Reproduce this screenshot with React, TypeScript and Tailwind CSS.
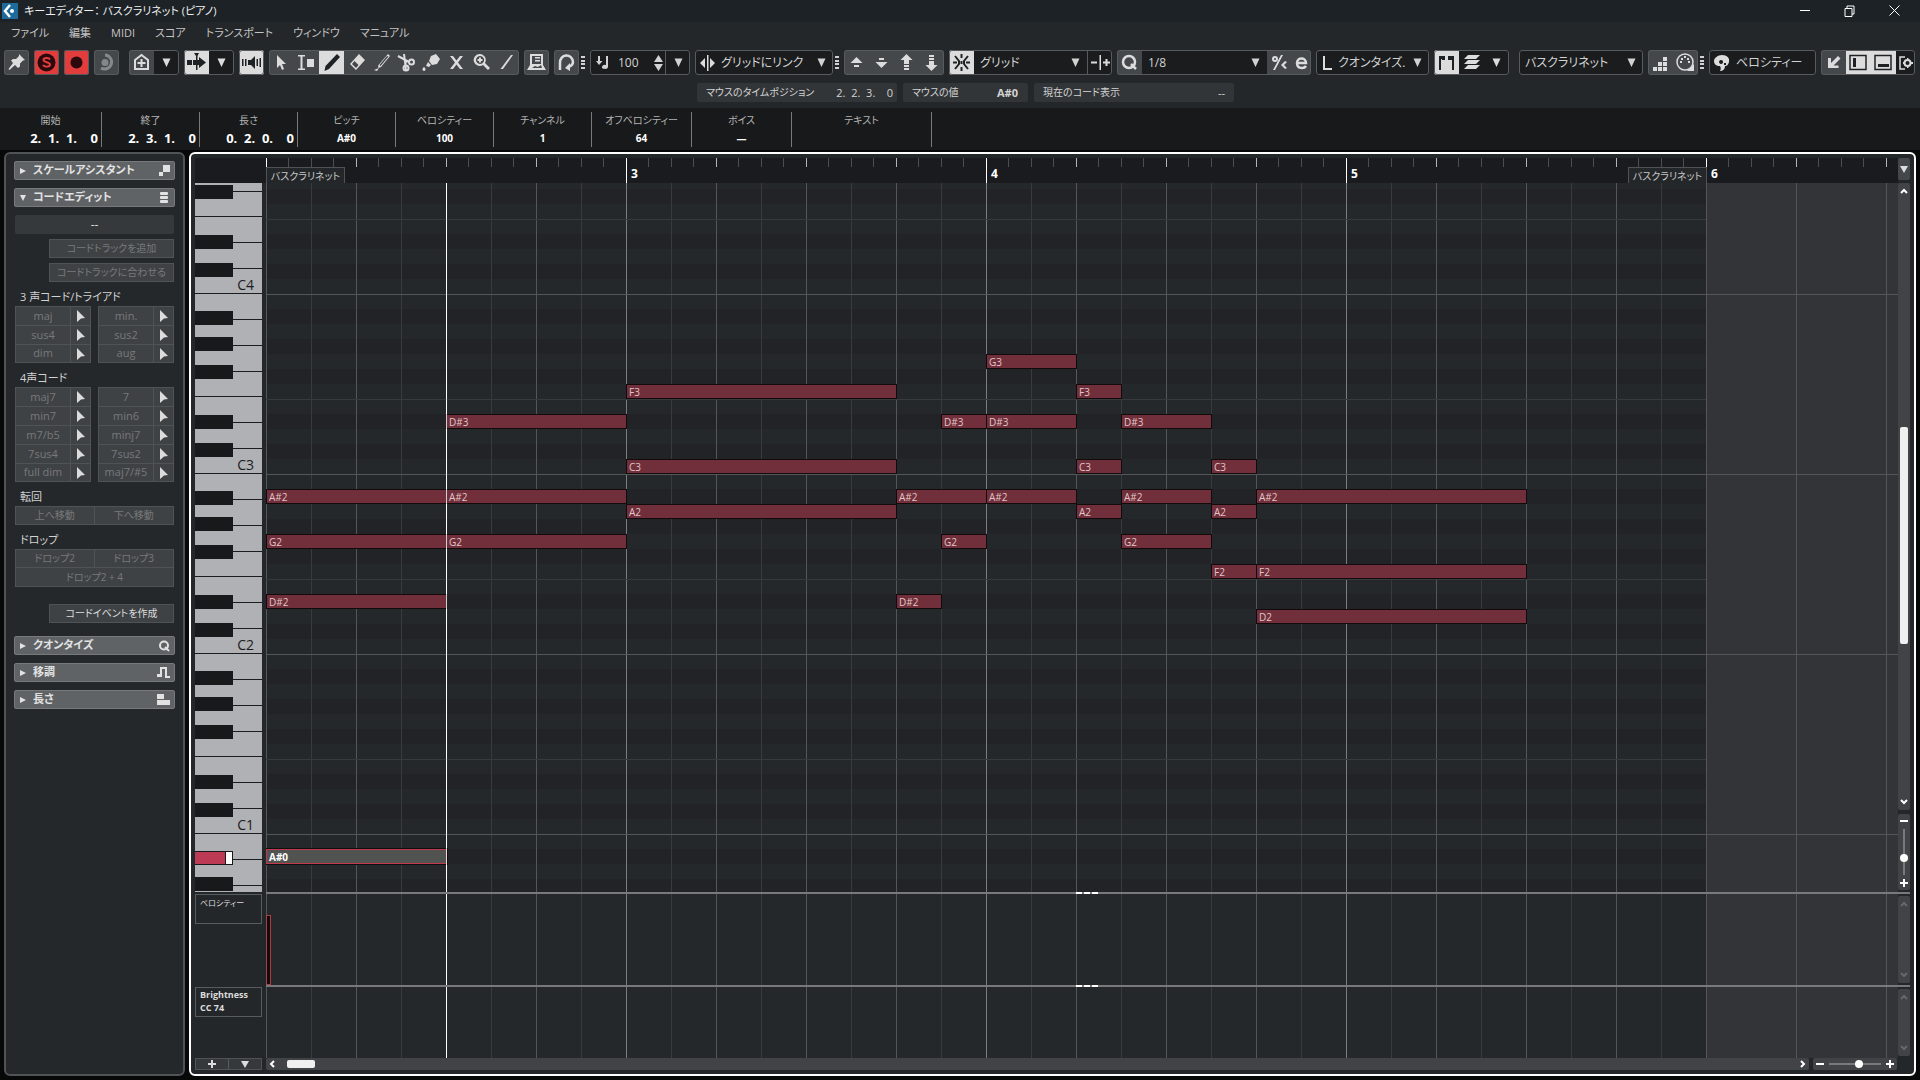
import { useState, type ReactNode } from 'react';

const EIGHTH = 45;
const ROW = 15;
const C4_TOP = 96;
const SONG_EIGHTHS = 32;

const menus = ['ファイル', '編集', 'MIDI', 'スコア', 'トランスポート', 'ウィンドウ', 'マニュアル'];

// pitch = semitones relative to C4, start / length in eighths
type Note = { name: string; pitch: number; start: number; len: number; selected?: boolean };

const notes: Note[] = [
    { name: 'A#2', pitch: -14, start: 0, len: 4 },
    { name: 'G2', pitch: -17, start: 0, len: 4 },
    { name: 'D#2', pitch: -21, start: 0, len: 4 },
    { name: 'A#0', pitch: -38, start: 0, len: 4, selected: true },
    { name: 'D#3', pitch: -9, start: 4, len: 4 },
    { name: 'A#2', pitch: -14, start: 4, len: 4 },
    { name: 'G2', pitch: -17, start: 4, len: 4 },
    { name: 'F3', pitch: -7, start: 8, len: 6 },
    { name: 'C3', pitch: -12, start: 8, len: 6 },
    { name: 'A2', pitch: -15, start: 8, len: 6 },
    { name: 'A#2', pitch: -14, start: 14, len: 2 },
    { name: 'D#2', pitch: -21, start: 14, len: 1 },
    { name: 'D#3', pitch: -9, start: 15, len: 1 },
    { name: 'G2', pitch: -17, start: 15, len: 1 },
    { name: 'G3', pitch: -5, start: 16, len: 2 },
    { name: 'D#3', pitch: -9, start: 16, len: 2 },
    { name: 'A#2', pitch: -14, start: 16, len: 2 },
    { name: 'F3', pitch: -7, start: 18, len: 1 },
    { name: 'C3', pitch: -12, start: 18, len: 1 },
    { name: 'A2', pitch: -15, start: 18, len: 1 },
    { name: 'D#3', pitch: -9, start: 19, len: 2 },
    { name: 'A#2', pitch: -14, start: 19, len: 2 },
    { name: 'G2', pitch: -17, start: 19, len: 2 },
    { name: 'C3', pitch: -12, start: 21, len: 1 },
    { name: 'A2', pitch: -15, start: 21, len: 1 },
    { name: 'F2', pitch: -19, start: 21, len: 1 },
    { name: 'A#2', pitch: -14, start: 22, len: 6 },
    { name: 'F2', pitch: -19, start: 22, len: 6 },
    { name: 'D2', pitch: -22, start: 22, len: 6 },
];

const infoFields = [
    { label: '開始', value: '2.  1.  1.    0', time: true, width: 'w-[102px]' },
    { label: '終了', value: '2.  3.  1.    0', time: true, width: 'w-[98px]' },
    { label: '長さ', value: '0.  2.  0.    0', time: true, width: 'w-[98px]' },
    { label: 'ピッチ', value: 'A#0', width: 'w-[98px]' },
    { label: 'ベロシティー', value: '100', width: 'w-[98px]' },
    { label: 'チャンネル', value: '1', width: 'w-[98px]' },
    { label: 'オフベロシティー', value: '64', width: 'w-[100px]' },
    { label: 'ボイス', value: '—', width: 'w-[100px]' },
    { label: 'テキスト', value: '', width: 'w-[140px]' },
];

const triads = [['maj', 'min.'], ['sus4', 'sus2'], ['dim', 'aug']];
const sevenths = [['maj7', '7'], ['min7', 'min6'], ['m7/b5', 'minj7'], ['7sus4', '7sus2'], ['full dim', 'maj7/#5']];

/* ---------- small pieces ---------- */

function Svg({ children, w = 19, h = 19 }: { children: ReactNode; w?: number; h?: number }) {
    return (
        <svg width={w} height={h} viewBox={`0 0 ${w} ${h}`} fill="currentColor" className="shrink-0" aria-hidden="true">
            {children}
        </svg>
    );
}

const Down = () => <Svg w={9} h={9}><path d="M0.5 0.5h8L4.5 9z" /></Svg>;
const Right = () => <Svg w={6} h={6}><path d="M0 0l6 3-6 3z" /></Svg>;

const Dots = () => (
    <Svg w={4} h={13}><path d="M0 0h4v2H0zM0 4h4v2H0zM0 7h4v2H0zM0 11h4v2H0z" /></Svg>
);

function Btn({ label, look = 'grey', children }: { label: string; look?: 'grey' | 'on' | 'dark' | 'red'; children: ReactNode }) {
    const looks = {
        grey: 'bg-[#45484b] text-[#dcdcdc]',
        on: 'bg-[#dcdcdc] text-[#1f2224]',
        dark: 'bg-[#1a1c1e] text-[#dcdcdc]',
        red: 'bg-[#e23c3c] text-[#2a0a0c]',
    };
    return (
        <button aria-label={label} className={`flex h-full w-[25px] shrink-0 items-center justify-center ${looks[look]}`}>
            {children}
        </button>
    );
}

function Group({ children, className = '' }: { children: ReactNode; className?: string }) {
    return (
        <div className={`flex h-[25px] shrink-0 overflow-hidden rounded-[3px] bg-[#1a1c1e] outline -outline-offset-1 outline-[#585b5e] ${className}`}>
            {children}
        </div>
    );
}

function Pick({ label, value, width }: { label: string; value: string; width: string }) {
    return (
        <label className={`flex h-full items-center gap-1 pr-[7px] pl-[6px] text-[#d2d2d2] ${width}`}>
            <select aria-label={label} className="min-w-0 flex-1 appearance-none bg-transparent text-[12px] outline-none">
                <option>{value}</option>
            </select>
            <Down />
        </label>
    );
}

/* ---------- toolbar ---------- */

const tools: { label: string; icon: ReactNode }[] = [
    { label: 'Object selection', icon: <path d="M5 2v13l3-3 2 5 2-1-2-5h4z" /> },
    { label: 'Range', icon: <path d="M1 2h7v1.5H5.5v12H8V17H1v-1.500h2.500v-12H1zM10 6h7v8h-7z" /> },
    { label: 'Draw', icon: <path d="M15 1l3 3L7 16l-4.500 2L3.500 13z" /> },
    { label: 'Erase', icon: <path fillRule="evenodd" d="M12 1l6 6-9 10-6-6zM5 11l4 4 2.500-3-4-4z" /> },
    { label: 'Trim', icon: <path d="M16 1l2 2-9 11-3 1 .5-3zM15 3L7.500 12l1 1L16.500 3.500zM2 17l5-2-2 3z" /> },
    { label: 'Split', icon: <g fill="none" stroke="currentColor" strokeWidth="2"><path d="M1 3l11 6M9 17L7 1M9 8l-1 5" /><circle cx="14.500" cy="9" r="2.500" /><circle cx="9" cy="15" r="2.500" /></g> },
    { label: 'Glue', icon: <path d="M9 3l5-2 4 5-3 5-5 1-3-4zM6 9l3 3-2 2-3-1zM2 14c2 1 2 4 0 4s-2-3 0-4z" /> },
    { label: 'Mute', icon: <path d="M3 3h3l3.500 4.500L13 3h3l-5 6.500 5 6.500h-3l-3.500-4.500L6 16H3l5-6.500z" /> },
    { label: 'Zoom', icon: <path fillRule="evenodd" d="M8 1a6 6 0 0 1 5 9l5 5-2 2-5-5A6 6 0 1 1 8 1zm0 2a4 4 0 1 0 .1 0zM7 4.500h2V6h1.500v2H9v1.500H7V8H5.500V6H7z" /> },
    { label: 'Line', icon: <path d="M14 2h2L6 16H3.500z" /> },
];

function Toolbar() {
    const [tool, setTool] = useState('Draw');

    return (
        <div className="flex h-[37px] items-center gap-[5px] overflow-hidden px-1">
            <Group><Btn label="Pin"><Svg><path d="M12 1l6 6-2 .5-3 3v3L11 15l-3-3-5.500 5-1-1L6 10 4 7.500 6 6h3l3-3z" /></Svg></Btn></Group>
            <Group>
                <Btn label="Solo" look="red">
                    <Svg><circle cx="9.500" cy="9.500" r="9" /><path d="M13 6.500c-1-2-6.500-2-6.500.5s6.500 2 6.500 4.500-5.500 3-7 .5" fill="none" stroke="#e23c3c" strokeWidth="2" /></Svg>
                </Btn>
            </Group>
            <Group><Btn label="Record" look="red"><Svg><circle cx="9.500" cy="9.500" r="6" /></Svg></Btn></Group>
            <Group>
                <Btn label="Monitor">
                    <Svg><path d="M8 2a7 7 0 1 1-4 13" fill="none" stroke="#85888a" strokeWidth="3" /><circle cx="8" cy="9.500" r="3.500" fill="#85888a" /></Svg>
                </Btn>
            </Group>

            <Group className="ml-[5px]">
                <Btn label="Constrain">
                    <Svg><path d="M3 7l6.500-5L16 7v9H3z" fill="none" stroke="currentColor" strokeWidth="2" /><path d="M8.500 6h2v3h3v2h-3v3h-2v-3h-3V9h3z" /></Svg>
                </Btn>
                <Btn label="Constrain options" look="dark"><Down /></Btn>
            </Group>
            <Group>
                <Btn label="Auto-scroll" look="on"><Svg><path d="M0 7h5v5H0zM7 0h5l-1.500 3v14H9V3zM6 7h6V4l7 5.500-7 5.500v-3H6z" /></Svg></Btn>
                <Btn label="Auto-scroll options" look="dark"><Down /></Btn>
            </Group>
            <Group>
                <Btn label="Acoustic feedback" look="on">
                    <Svg><path d="M0 6h1.500v7H0zM3 6h1.500v7H3zM6 7h3l4-4v13l-4-4H6zM14.500 6H16v7h-1.500zM17.500 5H19v9h-1.500z" /></Svg>
                </Btn>
            </Group>

            <Group>
                {tools.map((t) => (
                    <button
                        key={t.label}
                        aria-label={t.label}
                        onClick={() => setTool(t.label)}
                        className={`flex w-[25px] items-center justify-center ${tool === t.label ? 'bg-[#dcdcdc] text-[#1f2224]' : 'bg-[#45484b] text-[#dcdcdc]'}`}
                    >
                        <Svg>{t.icon}</Svg>
                    </button>
                ))}
            </Group>
            <Group>
                <Btn label="Edit active part"><Svg><path fillRule="evenodd" d="M3 1h13v11l3 5H0l3-5zM5 3v8h9V3zM5 15l3-2 3 1 3-2 1 3z" /><path d="M8 4h5v1.500H8zM8 7h5v1.500H8z" /></Svg></Btn>
            </Group>
            <Group>
                <Btn label="Loop"><Svg><path d="M3 17V10a6 6.500 0 0 1 13-1c0 3-2 4-4 5" fill="none" stroke="currentColor" strokeWidth="2.500" /><path d="M13 10v8l-5-3z" /></Svg></Btn>
            </Group>
            <div className="-ml-[3px] text-[#d2d2d2]"><Dots /></div>

            <Group className="w-[100px]">
                <label className="flex flex-1 items-center gap-2 pl-[6px] text-[#d2d2d2]">
                    <Svg w={14} h={16}><path d="M2 1h2v5h2.500L3 10 0 6h2zM10 1h2v11a3 2 0 1 1-2-2z" /></Svg>
                    <input aria-label="Insert velocity" defaultValue="100" className="w-7 bg-transparent text-[12px] outline-none" />
                    <Svg w={9} h={16}><path d="M4.500 0L9 7H0zM0 9h9l-4.500 7z" /></Svg>
                </label>
                <button aria-label="Velocity presets" className="flex w-[25px] items-center justify-center border-l border-[#585b5e] text-[#d2d2d2]"><Down /></button>
            </Group>
            <Group>
                <div className="flex items-center pl-[5px] text-[#dcdcdc]">
                    <Svg w={15} h={16}><path d="M5 3v10L0 8zM10 3v10l5-5zM7 0h1.500v16H7z" /></Svg>
                </div>
                <Pick label="Length quantize" value="グリッドにリンク" width="w-[118px]" />
            </Group>
            <div className="-ml-[3px] text-[#d2d2d2]"><Dots /></div>

            <Group>
                <Btn label="Move up"><Svg><path d="M9.500 4l6 6h-12zM7 12h5v2H7z" /></Svg></Btn>
                <Btn label="Move down"><Svg><path d="M9.500 15l6-6h-12zM7 5h5v2H7z" /></Svg></Btn>
                <Btn label="Octave up"><Svg><path d="M9.500 1l6 6H12v4H7V7H3.500zM7 12h5v2H7zM7 15h5v2H7z" /></Svg></Btn>
                <Btn label="Octave down"><Svg><path d="M9.500 18l6-6H12V8H7v4H3.500zM7 5h5v2H7zM7 2h5v2H7z" /></Svg></Btn>
            </Group>
            <Group>
                <Btn label="Snap" look="on">
                    <Svg><path d="M9.500 1v4M9.500 14v4M3 3l4 5v3l-4 5M16 3l-4 5v3l4 5M1 9.500h4M14 9.500h4M9.500 8v3" fill="none" stroke="currentColor" strokeWidth="2" /></Svg>
                </Btn>
                <Pick label="Snap type" value="グリッド" width="w-[113px]" />
                <button aria-label="Snap offset" className="flex w-[25px] items-center justify-center border-l border-[#585b5e] text-[#dcdcdc]">
                    <Svg><path d="M0 8.500h6v2H0zM8.500 2H10v15H8.500zM12 8.500h2.500V6h2v2.500H19v2h-2.500V13h-2v-2.500H12z" /></Svg>
                </button>
            </Group>
            <Group>
                <Btn label="Apply quantize"><Svg><circle cx="9" cy="9" r="6" fill="none" stroke="currentColor" strokeWidth="2.500" /><path d="M11 11l5 5" stroke="currentColor" strokeWidth="2.500" /></Svg></Btn>
                <Pick label="Quantize preset" value="1/8" width="w-[125px]" />
                <Btn label="Soft quantize"><Svg w={17} h={17}><circle cx="4" cy="5" r="2" fill="none" stroke="currentColor" strokeWidth="2" /><path d="M10 1h2L4 16H2zM14 7l-4 4 4 4 2-1-3-3 3-3z" /></Svg></Btn>
                <button aria-label="Open quantize panel" className="flex w-[19px] items-center justify-center bg-[#45484b] text-[#dcdcdc]">
                    <Svg w={13} h={14}><path d="M2 7h9c0-6-9-6-9 0s7 6 9 3" fill="none" stroke="currentColor" strokeWidth="2.500" /></Svg>
                </button>
            </Group>
            <Group>
                <div className="flex items-center pl-[7px] text-[#dcdcdc]"><Svg w={9} h={14}><path d="M0 0h2v12h7v2H0z" /></Svg></div>
                <Pick label="Length quantize preset" value="クオンタイズ." width="w-[97px]" />
            </Group>
            <Group>
                <Btn label="Show part borders" look="on"><Svg><path d="M2 3h6v3H4v11H2zM11 3h6v14h-2V6h-4z" /><path d="M4 3h4v4H5zM11 3h4v4h-4z" /></Svg></Btn>
                <Btn label="Edit layers" look="dark"><Svg><path d="M6 2h12l-4 4H2zM6 7h12l-4 4H2zM6 12h12l-4 4H2z" /></Svg></Btn>
                <Btn label="Layer options" look="dark"><Down /></Btn>
            </Group>
            <Group className="ml-[5px]"><Pick label="Part" value="バスクラリネット" width="w-[124px]" /></Group>
            <Group>
                <Btn label="Step input"><Svg><path d="M2 14h4v4H2zM7 14h4v4H7zM12 14h4v4h-4zM7 9h4v4H7zM12 9h4v4h-4zM12 4h4v4h-4z" /></Svg></Btn>
                <Btn label="MIDI input">
                    <Svg><circle cx="9" cy="9" r="8" fill="none" stroke="currentColor" strokeWidth="1.500" /><path d="M4 8h2v2H4zM5 5h2v2H5zM8 3h2v2H8zM11 5h2v2h-2zM12 8h2v2h-2zM18 11v7h-7z" /></Svg>
                </Btn>
            </Group>
            <div className="-ml-[3px] text-[#d2d2d2]"><Dots /></div>
            <Group className="w-[107px]">
                <div className="flex items-center gap-[6px] pl-[5px] text-[#dcdcdc]">
                    <Svg w={16} h={17}><path fillRule="evenodd" d="M8 1c5 0 8 3 7 7s-3 4-4 4c0 3-2 5-5 5 1-2 1-3 0-5-4 0-6-2-6-5s4-6 8-6zM7 6a2 2 0 1 0 .1 0zM10 9h2v2h-2z" /></Svg>
                    <button className="text-[12px] whitespace-nowrap text-[#d2d2d2]">ベロシティー</button>
                </div>
            </Group>
            <Group>
                <Btn label="Open in lower zone"><Svg><path d="M4 5h3v5l7-7 2.500 2.500-7 7h5V15H4z" /></Svg></Btn>
                <Btn label="Left zone" look="on"><Svg><path d="M1 2.500h16v14H1z" fill="none" stroke="currentColor" strokeWidth="1.500" /><path d="M4 5h3v9H4z" /></Svg></Btn>
                <Btn label="Lower zone" look="on"><Svg><path d="M1 2.500h16v14H1z" fill="none" stroke="currentColor" strokeWidth="1.500" /><path d="M4 11h11v3H4z" /></Svg></Btn>
                <button aria-label="Layout setup" className="flex w-[19px] items-center justify-center text-[#dcdcdc]">
                    <Svg w={14} h={14}><path d="M6 1H1v12h5" fill="none" stroke="currentColor" strokeWidth="1.500" /><circle cx="8.500" cy="7" r="3" fill="none" stroke="currentColor" strokeWidth="2" /><path d="M8 2h1.500v2H8zM8 10h1.500v2H8zM12 6h2v2h-2zM4 6h2v2H4z" /></Svg>
                </button>
            </Group>
        </div>
    );
}

/* ---------- left inspector ---------- */

function Section({ title, open, children }: { title: string; open?: boolean; children: ReactNode }) {
    return (
        <button className="flex h-[19px] w-full items-center gap-[6px] rounded-[2px] border border-[#77797b] bg-[#5f6365] px-[4px] text-[11px] font-bold text-[#e2e2e2]">
            <span className="flex w-[8px] justify-center">{open ? <Svg w={6} h={6}><path d="M0 0h6L3 6z" /></Svg> : <Right />}</span>
            <span className="flex-1 text-left">{title}</span>
            {children}
        </button>
    );
}

function ChordGrid({ rows }: { rows: string[][] }) {
    return (
        <div className="grid grid-cols-2 gap-x-[7px]">
            {rows.flat().map((name) => (
                <div key={name} className="flex h-[19px] border border-b-0 border-[#505356] bg-[#3f4245] nth-last-[-n+2]:border-b">
                    <button className="flex-1 border-r border-[#505356] text-[11px] text-[#77797b]">{name}</button>
                    <button aria-label={`${name} drag`} className="flex w-[19px] items-center justify-center text-[#dcdcdc]">
                        <Svg w={9} h={12}><path d="M1 0l8 8-4 .5L1 12z" /></Svg>
                    </button>
                </div>
            ))}
        </div>
    );
}

const dimButton = 'h-[19px] border border-[#505356] bg-[#3f4245] text-[10px] text-[#77797b]';
const heading = 'h-6 pl-[5px] text-[11px] leading-[29px] text-[#d2d2d2]';

function Inspector() {
    return (
        <aside className="mr-1 ml-1 flex w-[181px] shrink-0 flex-col rounded-[6px] border-2 border-[#505356] bg-[#24282b] px-2 pt-[7px]">
            <div className="flex flex-col gap-2">
                <Section title="スケールアシスタント"><Svg w={11} h={11}><path d="M4 0h7v7H4zM0 7h4v4H0z" /></Svg></Section>
                <Section title="コードエディット" open><Svg w={11} h={12}><rect x="1" width="8" height="3" rx="1" /><rect x="1" y="4" width="8" height="3" rx="1" /><rect x="1" y="8" width="8" height="3" rx="1" /></Svg></Section>
            </div>

            <div className="flex flex-col px-px pt-2">
                <div className="h-[19px] rounded-[2px] bg-[#36393c] text-center text-[12px] leading-[19px] text-[#dcdcdc]">--</div>
                <button className={`mt-[5px] ml-[34px] ${dimButton}`}>コードトラックを追加</button>
                <button className={`mt-[5px] ml-[34px] ${dimButton}`}>コードトラックに合わせる</button>

                <h3 className={heading}>3 声コード/トライアド</h3>
                <ChordGrid rows={triads} />
                <h3 className={heading}>4声コード</h3>
                <ChordGrid rows={sevenths} />

                <h3 className={heading}>転回</h3>
                <div className="grid grid-cols-2">
                    <button className={dimButton}>上へ移動</button>
                    <button className={`border-l-0 ${dimButton}`}>下へ移動</button>
                </div>
                <h3 className={heading}>ドロップ</h3>
                <div className="grid grid-cols-2">
                    <button className={dimButton}>ドロップ2</button>
                    <button className={`border-l-0 ${dimButton}`}>ドロップ3</button>
                    <button className={`col-span-2 border-t-0 ${dimButton}`}>ドロップ2 + 4</button>
                </div>
                <button className="mt-[17px] ml-[34px] h-[19px] border border-[#505356] bg-[#3f4245] text-[10px] text-[#dcdcdc]">コードイベントを作成</button>
            </div>

            <div className="flex flex-col gap-2 pt-[13px]">
                <Section title="クオンタイズ">
                    <Svg w={11} h={12}><path d="M6 7l4 4" stroke="currentColor" strokeWidth="2" /><circle cx="5" cy="5.500" r="4" fill="none" stroke="currentColor" strokeWidth="2" /></Svg>
                </Section>
                <Section title="移調"><Svg w={13} h={12}><path d="M0 10V7h3V0h7v9h3v2H8V2H5v8H0z" /></Svg></Section>
                <Section title="長さ"><Svg w={13} h={11}><path d="M0 0h7v5H0zM0 6h13v5H0z" /></Svg></Section>
            </div>
        </aside>
    );
}

/* ---------- timeline ---------- */

function GridLines() {
    return (
        <>
            <div className="absolute inset-y-0 right-0 left-[1440px] bg-[#333437]" />
            {Array.from({ length: 61 }, (_, i) => {
                if (i > SONG_EIGHTHS && i % 2) return null;
                const tone = i === 0 ? 'bg-[#55585a]' : i % 8 === 0 && i < SONG_EIGHTHS ? 'bg-[#7b7e80]' : i % 2 === 0 ? 'bg-[#54575a]' : 'bg-[#373b3e]';
                return <div key={i} className={`absolute inset-y-0 w-px ${tone}`} style={{ left: i * EIGHTH }} />;
            })}
            <div className="absolute inset-y-0 left-[180px] w-px bg-white" />
        </>
    );
}

const partName = 'absolute top-[9px] h-4 w-[79px] border border-b-0 border-[#505356] bg-[#24272a] text-center text-[10px] leading-4 text-[#c8c8c8]';

function Ruler() {
    return (
        <div className="relative flex-1 overflow-hidden bg-[#191b1e]">
            {Array.from({ length: 120 }, (_, i) => {
                const tone = i % 16 === 0 ? 'bg-white' : i % 4 === 0 ? 'bg-[#b4b4b4]' : 'bg-[#4b4e51]';
                const full = i % 16 === 0 && i > 0 && i < 64;
                return <div key={i} className={`absolute top-0 w-px ${full ? 'h-full' : 'h-[9px]'} ${tone}`} style={{ left: Math.floor((i * EIGHTH) / 2) }} />;
            })}
            {[3, 4, 5, 6].map((bar, i) => (
                <span key={bar} className="absolute top-[8px] text-[12px] leading-4 font-bold text-white" style={{ left: (i + 1) * 360 + 5 }}>{bar}</span>
            ))}
            <span className={`left-0 ${partName}`}>バスクラリネット</span>
            <span className={`left-[1362px] ${partName}`}>バスクラリネット</span>
        </div>
    );
}

function Keyboard() {
    // heights measured upwards from the bottom edge of each C
    const splits = [0, 25, 51, 77, 102, 128, 154];
    const blacks = [30, 58, 108, 136, 162];
    return (
        <div className="relative w-[67px] shrink-0 overflow-hidden bg-[#b0b1b4]">
            {[-1, 0, 1, 2, 3, 4].map((o) => {
                const base = 110 + o * 180;
                return (
                    <div key={o}>
                        {splits.map((s) => <div key={s} className="absolute inset-x-0 h-px bg-[#1a1c1e]" style={{ top: base - s }} />)}
                        {blacks.map((b) => <div key={b} className="absolute left-0 h-[14px] w-[38px] bg-[#17191a]" style={{ top: base - b }} />)}
                        {o >= 0 && o < 4 && <span className="absolute right-[8px] text-[14px] leading-4 text-[#1a1c1e]" style={{ top: base - 16 }}>C{4 - o}</span>}
                    </div>
                );
            })}
            <div className="absolute top-[668px] left-0 flex h-[14px] w-[38px] border-y border-r border-[#17191a] bg-white">
                <div className="w-[31px] border-r border-[#17191a] bg-[#bd3a54]" />
            </div>
        </div>
    );
}

function PianoRoll() {
    const black = [1, 3, 6, 8, 10];
    return (
        <div className="relative flex-1 overflow-hidden bg-[#24282b]">
            {Array.from({ length: 60 }, (_, i) => 7 - i).filter((p) => black.includes((p + 120) % 12)).map((p) => (
                <div key={p} className="absolute left-0 h-[15px] w-[1440px] bg-[#212326]" style={{ top: C4_TOP - p * ROW }} />
            ))}
            <GridLines />
            {[0, 1, 2, 3, 4].map((o) => (
                <div key={o}>
                    <div className="absolute inset-x-0 h-px bg-[#54575a]" style={{ top: 111 + o * 180 }} />
                    <div className="absolute left-0 h-px w-[1440px] bg-[#373b3e]" style={{ top: 36 + o * 180 }} />
                </div>
            ))}
            {notes.map((n) => (
                <div
                    key={`${n.name}-${n.start}`}
                    className={`absolute h-[15px] overflow-hidden border pl-[2px] text-[10px] leading-[15px] ${n.selected ? 'border-[#c2394d] bg-[#505350] font-bold text-white outline outline-[#0e0f10]' : 'border-[#120a0b] bg-[#702f3a] text-[#e2c6ca]'}`}
                    style={{ left: n.start * EIGHTH, top: C4_TOP - n.pitch * ROW, width: n.len * EIGHTH + 1 }}
                >
                    {n.name}
                </div>
            ))}
            <div className="absolute top-0 left-[180px] h-full w-px bg-white/80" />
        </div>
    );
}

const Chevron = ({ d }: { d: string }) => (
    <svg width="8" height="8" viewBox="0 0 8 8" fill="none" stroke="currentColor" strokeWidth="2" className="shrink-0"><path d={d} /></svg>
);
const up = 'M1 6l3-3 3 3';
const down = 'M1 2l3 3 3-3';

function LaneBar() {
    return (
        <div className="my-[2px] flex w-3 shrink-0 flex-col items-center justify-between rounded-[2px] bg-[#414346] py-1 text-[#66696b]">
            <Chevron d={up} />
            <Chevron d={down} />
        </div>
    );
}

function Splitter() {
    return (
        <div className="flex h-[2px] shrink-0">
            <div className="w-[71px] shrink-0" />
            <div className="flex-1 bg-[#77797b]">
                <div className="ml-[810px] h-[2px] w-[22px] border-t-2 border-dashed border-white" />
            </div>
        </div>
    );
}

function Lane({ title, className, children }: { title: ReactNode; className: string; children?: ReactNode }) {
    return (
        <div className={`flex shrink-0 ${className}`}>
            <div className="mr-[4px] w-[67px] shrink-0">
                <div className="h-[30px] border border-[#585b5e] pl-[4px] text-[#dcdcdc]">{title}</div>
            </div>
            <div className="relative flex-1 overflow-hidden bg-[#24282b]">
                <GridLines />
                {children}
            </div>
            <LaneBar />
        </div>
    );
}

const Minus = () => <Svg w={8} h={8}><path d="M0 3h8v2H0z" /></Svg>;
const Plus = () => <Svg w={8} h={8}><path d="M3 0h2v3h3v2H5v3H3V5H0V3h3z" /></Svg>;

function Editor() {
    return (
        <main className="mr-[4px] flex min-w-0 flex-1 flex-col overflow-hidden rounded-[6px] border-2 border-white bg-[#24272a] p-1">
            <div className="flex h-[25px] shrink-0">
                <div className="w-[71px] shrink-0 bg-[#191b1e]" />
                <Ruler />
                <button aria-label="Ruler format" className="mb-[3px] flex w-3 items-center justify-center rounded-[2px] bg-[#45484b] text-[#dcdcdc]"><Svg w={8} h={7}><path d="M0 0h8L4 7z" /></Svg></button>
            </div>

            <div className="flex min-h-[300px] flex-1">
                <Keyboard />
                <div className="w-[4px] shrink-0" />
                <PianoRoll />
                <div className="flex w-3 shrink-0 flex-col gap-1 pb-[2px] text-white">
                    <div className="flex flex-1 flex-col items-center rounded-[2px] bg-[#414346] py-1">
                        <Chevron d={up} />
                        <div className="grow-[233]" />
                        <div className="h-[217px] w-2 shrink-0 rounded-[2px] bg-[#f0f0f0]" />
                        <div className="grow-[155]" />
                        <Chevron d={down} />
                    </div>
                    <div className="flex h-[76px] flex-col items-center justify-between rounded-[2px] bg-[#414346] py-[3px]">
                        <Minus />
                        <input
                            type="range"
                            aria-label="Vertical zoom"
                            defaultValue="66"
                            className="h-[46px] w-2 appearance-none bg-transparent [writing-mode:vertical-lr] [&::-webkit-slider-runnable-track]:w-[2px] [&::-webkit-slider-runnable-track]:bg-[#77797b] [&::-webkit-slider-thumb]:-ml-[3px] [&::-webkit-slider-thumb]:size-2 [&::-webkit-slider-thumb]:appearance-none [&::-webkit-slider-thumb]:rounded-full [&::-webkit-slider-thumb]:bg-white"
                        />
                        <Plus />
                    </div>
                </div>
            </div>

            <Splitter />
            <Lane className="h-[91px]" title={<span className="block text-[8px] leading-4">ベロシティー</span>}>
                <div className="absolute bottom-0 left-0 h-[70px] w-[5px] border border-[#a8404a] bg-[#170a0b]" />
            </Lane>
            <Splitter />
            <Lane
                className="h-[71px]"
                title={<span className="block text-[9px] leading-[13px] font-bold">Brightness<br />CC 74</span>}
            />

            <div className="flex h-3 shrink-0 text-white">
                <div className="mr-[4px] flex w-[67px] shrink-0 divide-x divide-[#585b5e] border border-[#505356] bg-[#36393c] text-[#dcdcdc]">
                    <button aria-label="Add controller lane" className="flex flex-1 items-center justify-center"><Plus /></button>
                    <button aria-label="Lane presets" className="flex flex-1 items-center justify-center"><Svg w={8} h={7}><path d="M0 0h8L4 7z" /></Svg></button>
                </div>
                <div className="flex flex-1 items-center rounded-[2px] bg-[#414346] px-[3px]">
                    <Chevron d="M5 1L2 4l3 3" />
                    <div className="ml-[10px] h-2 w-7 rounded-[2px] bg-[#f0f0f0]" />
                    <div className="flex-1" />
                    <Chevron d="M3 1l3 3-3 3" />
                </div>
                <div className="mr-[13px] ml-1 flex w-[84px] items-center justify-between rounded-[2px] bg-[#414346] px-[3px]">
                    <Minus />
                    <input
                        type="range"
                        aria-label="Horizontal zoom"
                        defaultValue="60"
                        className="h-2 w-[52px] appearance-none bg-transparent [&::-webkit-slider-runnable-track]:h-[2px] [&::-webkit-slider-runnable-track]:bg-[#77797b] [&::-webkit-slider-thumb]:-mt-[3px] [&::-webkit-slider-thumb]:size-2 [&::-webkit-slider-thumb]:appearance-none [&::-webkit-slider-thumb]:rounded-full [&::-webkit-slider-thumb]:bg-white"
                    />
                    <Plus />
                </div>
            </div>
        </main>
    );
}

const status = 'flex h-[19px] rounded-[2px] bg-[#323538] pl-[9px] justify-between';

export default function App() {
    return (
        <div className="flex h-screen flex-col overflow-hidden bg-[#070808] font-['Open_Sans','Noto_Sans_CJK_JP',sans-serif] [font-feature-settings:'palt'] text-[#d2d2d2]">
            <header className="bg-[#24272a]">
                {/* window title */}
                <div className="flex h-[22px] items-center bg-[#1c2226] pl-[2px]">
                    <svg width="16" height="16" viewBox="0 0 16 16" className="shrink-0">
                        <rect width="16" height="16" fill="#1d6a9c" />
                        <path d="M8 2L3 8l5 6" fill="none" stroke="#fff" strokeWidth="2.500" />
                        <circle cx="10" cy="8" r="2" fill="#fff" />
                    </svg>
                    <h1 className="ml-[6px] flex-1 text-[11px] text-[#f0f0f0]">キーエディター： バスクラリネット (ピアノ)</h1>
                    <div className="flex text-white">
                        <button aria-label="Minimize" className="flex w-[45px] justify-center"><Svg w={10} h={10}><path d="M0 5h10v1H0z" /></Svg></button>
                        <button aria-label="Restore" className="flex w-[45px] justify-center">
                            <Svg w={11} h={12}><path d="M1 3.500h7v8H1zM3 3.500V1h7v8H8" fill="none" stroke="currentColor" /></Svg>
                        </button>
                        <button aria-label="Close" className="mr-[3px] flex w-[45px] justify-center"><Svg w={11} h={11}><path d="M0.500 0.500l10 10M10.500 0.500l-10 10" stroke="currentColor" /></Svg></button>
                    </div>
                </div>

                <nav className="flex h-[22px] items-center gap-5 pl-[11px] text-[11px] text-[#c3c3c3]">
                    {menus.map((m) => <button key={m}>{m}</button>)}
                </nav>

                <Toolbar />

                {/* status line */}
                <div className="flex h-[27px] items-center justify-center gap-[6px] pb-[4px] pl-[11px] text-[11px] leading-[19px]">
                    <div className={`w-[200px] pr-1 ${status}`}><span className="text-[10px]">マウスのタイムポジション</span><span className="whitespace-pre">2.  2.  3.    0</span></div>
                    <div className={`w-[125px] pr-[10px] ${status}`}><span className="text-[10px]">マウスの値</span><b>A#0</b></div>
                    <div className={`w-[200px] pr-[9px] ${status}`}><span className="text-[10px]">現在のコード表示</span><span>--</span></div>
                </div>
            </header>

            {/* info line for the selected note */}
            <dl className="flex h-[42px] shrink-0 items-start bg-[#17191a] pt-1">
                {infoFields.map((f) => (
                    <div key={f.label} className={`h-[35px] border-r border-[#77797b] text-center ${f.width}`}>
                        <dt className="text-[10px] leading-4 text-[#b4b4b4]">{f.label}</dt>
                        {f.time
                            ? <dd className="pr-[3px] text-right text-[13px] leading-5 font-bold whitespace-pre text-white">{f.value}</dd>
                            : <dd className="text-[10px] leading-5 font-bold text-white">{f.value}</dd>}
                    </div>
                ))}
            </dl>

            <div className="flex min-h-0 flex-1 pt-[2px] pb-1">
                <Inspector />
                <Editor />
            </div>
        </div>
    );
}
